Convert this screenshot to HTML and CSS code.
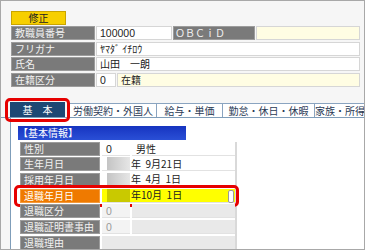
FILE: index.html
```html
<!DOCTYPE html>
<html lang="ja">
<head>
    <meta charset="UTF-8">
    <title>社員情報 - 基本</title>
    <link rel="stylesheet" href="styles.css">
</head>
<body>
    <div class="frame">
        <!-- 社員ヘッダー -->
        <div class="top">
            <div class="btn-edit">修正</div>
            <div class="row">
                <div class="label w84">教職員番号</div>
                <div class="val w76 num">100000</div>
                <div class="label w82 spaced">ＯＢＣｉＤ</div>
                <div class="val grow cream"></div>
            </div>
            <div class="row">
                <div class="label w84">フリガナ</div>
                <div class="val grow">ﾔﾏﾀﾞ ｲﾁﾛｳ</div>
            </div>
            <div class="row">
                <div class="label w84">氏名</div>
                <div class="val grow">山田　一朗</div>
            </div>
            <div class="row">
                <div class="label w84">在籍区分</div>
                <div class="val w20 num">0</div>
                <div class="val grow cream">在籍</div>
            </div>
        </div>

        <!-- タブ -->
        <div class="tabs">
            <div class="tab active">基　本</div>
            <div class="tab t2">労働契約・外国人</div>
            <div class="tab t3">給与・単価</div>
            <div class="tab t4">勤怠・休日・休暇</div>
            <div class="tab t5">家族・所得税</div>
        </div>

        <div class="panel">
            <div class="section-title">【基本情報】</div>
            <div class="form">
                <div class="frow">
                    <div class="flabel">性別</div>
                    <div class="fval code num">0</div>
                    <div class="fval grow cream">男性</div>
                </div>
                <div class="frow">
                    <div class="flabel">生年月日</div>
                    <div class="fval grow date"><span class="year"></span>年&nbsp;&nbsp;9月21日</div>
                </div>
                <div class="frow">
                    <div class="flabel">採用年月日</div>
                    <div class="fval grow date"><span class="year"></span>年&nbsp;&nbsp;4月&nbsp;&nbsp;1日</div>
                </div>
                <div class="frow focus">
                    <div class="flabel orange">退職年月日</div>
                    <div class="fval grow date hot"><span class="year"></span>年10月&nbsp;&nbsp;1日<span class="caret"></span></div>
                </div>
                <div class="frow">
                    <div class="flabel">退職区分</div>
                    <div class="fval code off num">0</div>
                    <div class="fval grow off"></div>
                </div>
                <div class="frow">
                    <div class="flabel">退職証明書事由</div>
                    <div class="fval code off num">0</div>
                    <div class="fval grow off"></div>
                </div>
                <div class="frow">
                    <div class="flabel">退職理由</div>
                    <div class="fval grow off"></div>
                </div>
            </div>
        </div>
    </div>
</body>
</html>
```

FILE: styles.css
```css
body { margin: 0; font-family: "Noto Sans CJK JP", sans-serif; font-size: 10px; color: #222; }
.frame { width: 365px; height: 250px; box-sizing: border-box; border: 1px solid #a8a8a8; background: #f6f6f6; overflow: hidden; display: flex; flex-direction: column; }

/* header block */
.top { padding: 10px 0 0 10px; width: 349px; }
.btn-edit { width: 55px; height: 14px; box-sizing: border-box; background: #f7cf00; border: 1px solid #c9a400; text-align: center; line-height: 12px; font-size: 10px; margin-bottom: 1px; }
.row { display: flex; gap: 1px; height: 14px; margin-bottom: 1.5px; }
.label { background: #7a7a7a; color: #f2f2f2; border: 1px solid #9c9c9c; box-sizing: border-box; padding-left: 3px; line-height: 12px; }
.val { background: #fff; border: 1px solid #d6d6d6; box-sizing: border-box; padding-left: 3px; line-height: 12px; }
.cream { background: #fffde3; }
.grow { flex: 1; }
.w84 { width: 84px; }
.w82 { width: 82px; }
.w76 { width: 76px; }
.w20 { width: 20px; }
.num { font-family: "Liberation Sans", sans-serif; font-size: 10.5px; }
.spaced { padding-left: 1px; }

/* tabs */
.tabs { display: flex; align-items: flex-end; margin-top: 14px; padding-left: 9px; height: 15px; border-bottom: 1px solid #7f9db9; }
.tab { height: 14px; box-sizing: border-box; border: 1px solid #8aa4c0; border-bottom: none; background: #fff; color: #2a3a55; text-align: center; line-height: 13px; white-space: nowrap; overflow: hidden; flex-shrink: 0; }
.tab.active { position: relative; overflow: visible; width: 55px; background: #1e4874; color: #fff; border-color: #1e4874; margin-right: 4px; height: 14.5px; }
.tab.active::after { content: ""; position: absolute; left: -6px; right: -6px; top: -5px; bottom: -5px; border: 3px solid #e60000; border-radius: 5px; }
.t2 { width: 88px; }
.t3 { width: 66px; border-left: none; }
.t4 { width: 92px; border-left: none; }
.t5 { width: 60px; border-left: none; }

/* panel */
.panel { flex: 1; background: #fff; margin-left: 9px; border-left: 1px solid #7f9db9; padding: 8px 0 0 7px; }
.section-title { width: 168px; height: 14px; background: linear-gradient(#1634c0, #2a4fd6); color: #fff; line-height: 14px; }
.form { width: 215px; margin-top: 2px; padding-left: 2px; border-right: 2px solid #d9d9d9; display: flex; flex-direction: column; gap: 1.7px; }
.frow { display: flex; gap: 2px; height: 14px; position: relative; }
.flabel { width: 80px; flex-shrink: 0; background: #7a7a7a; color: #f2f2f2; border: 1px solid #9c9c9c; box-sizing: border-box; padding-left: 3px; line-height: 12px; }
.flabel.orange { background: #ef7a00; border-color: #f59a3a; color: #fff; }
.fval { background: #fff; box-sizing: border-box; padding-left: 4px; line-height: 14px; border-bottom: 1px solid #e2e2e2; }
.fval.code { width: 28px; flex-shrink: 0; }
.fval.off { background: #e9e9e9; color: #9a9a9a; }
.fval.code.off { background: #f3f3f3; }
.date { display: flex; align-items: center; padding-left: 5px; }
.year { width: 23px; height: 13px; margin-right: 1px; background: linear-gradient(90deg, #c4c4c4, #e6e6e6); }
.hot { background: #ffff00; position: relative; }
.hot .year { background: #c9c900; }
.caret { position: absolute; right: 1px; top: 1px; width: 4px; height: 11px; background: #fff; border: 1px solid #9a9a9a; border-radius: 2px; }
.frow.focus::after { content: ""; position: absolute; left: -6px; right: -4px; top: -4px; bottom: -4px; border: 3px solid #e60000; border-radius: 5px; }
```
